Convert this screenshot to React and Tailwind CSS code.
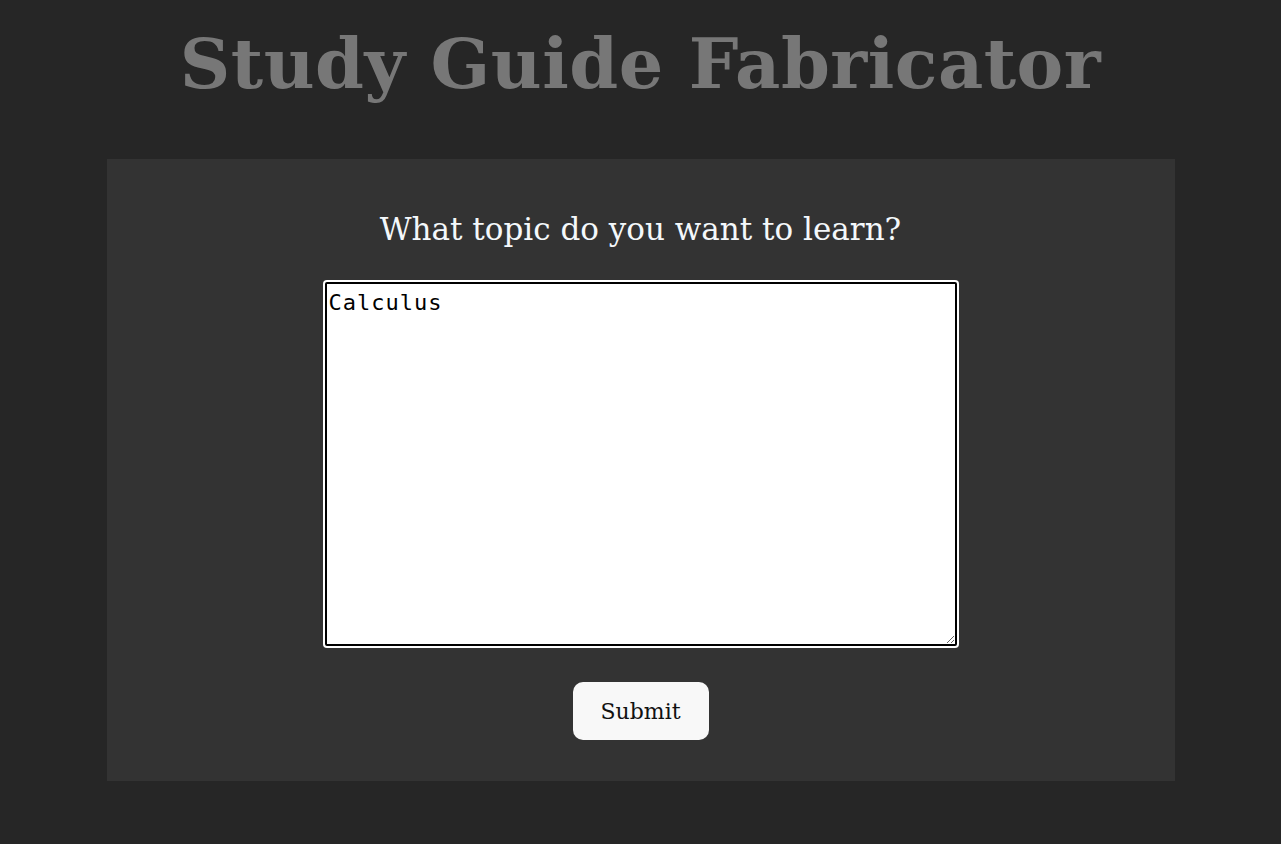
import React, { useState } from 'react';

const serif = { fontFamily: 'Georgia, "DejaVu Serif", "Liberation Serif", serif' };

export default function App() {
  const [topic, setTopic] = useState('Calculus');

  return (
    <div className="min-h-screen w-full bg-[#262626] flex flex-col items-center" style={serif}>
      <h1 className="mt-[16px] h-[96px] text-[70px] leading-[96px] font-bold text-[#777777] tracking-[0.5px]">
        Study Guide Fabricator
      </h1>

      <div className="mt-[47px] w-[1068px] h-[622px] bg-[#333333] flex flex-col items-center">
        <h2 className="mt-[48px] h-[44px] text-[31px] leading-[44px] text-[#f4f8fb]">
          What topic do you want to learn?
        </h2>

        <div className="mt-[29px] rounded-[4px] bg-white p-[2px]">
          <textarea
            value={topic}
            onChange={e => setTopic(e.target.value)}
            className="block w-[632px] h-[364px] border-2 border-black rounded-[2px] bg-white text-black text-[22px] leading-[24px] tracking-[1px] px-[2px] pt-[7px] pb-[2px] outline-none resize"
            style={{ fontFamily: '"DejaVu Sans Mono", "Liberation Mono", monospace' }}
          />
        </div>

        <button className="mt-[34px] w-[136px] h-[58px] rounded-[10px] bg-[#f8f8f8] text-[#111] text-[22px]">
          Submit
        </button>
      </div>
    </div>
  );
}
